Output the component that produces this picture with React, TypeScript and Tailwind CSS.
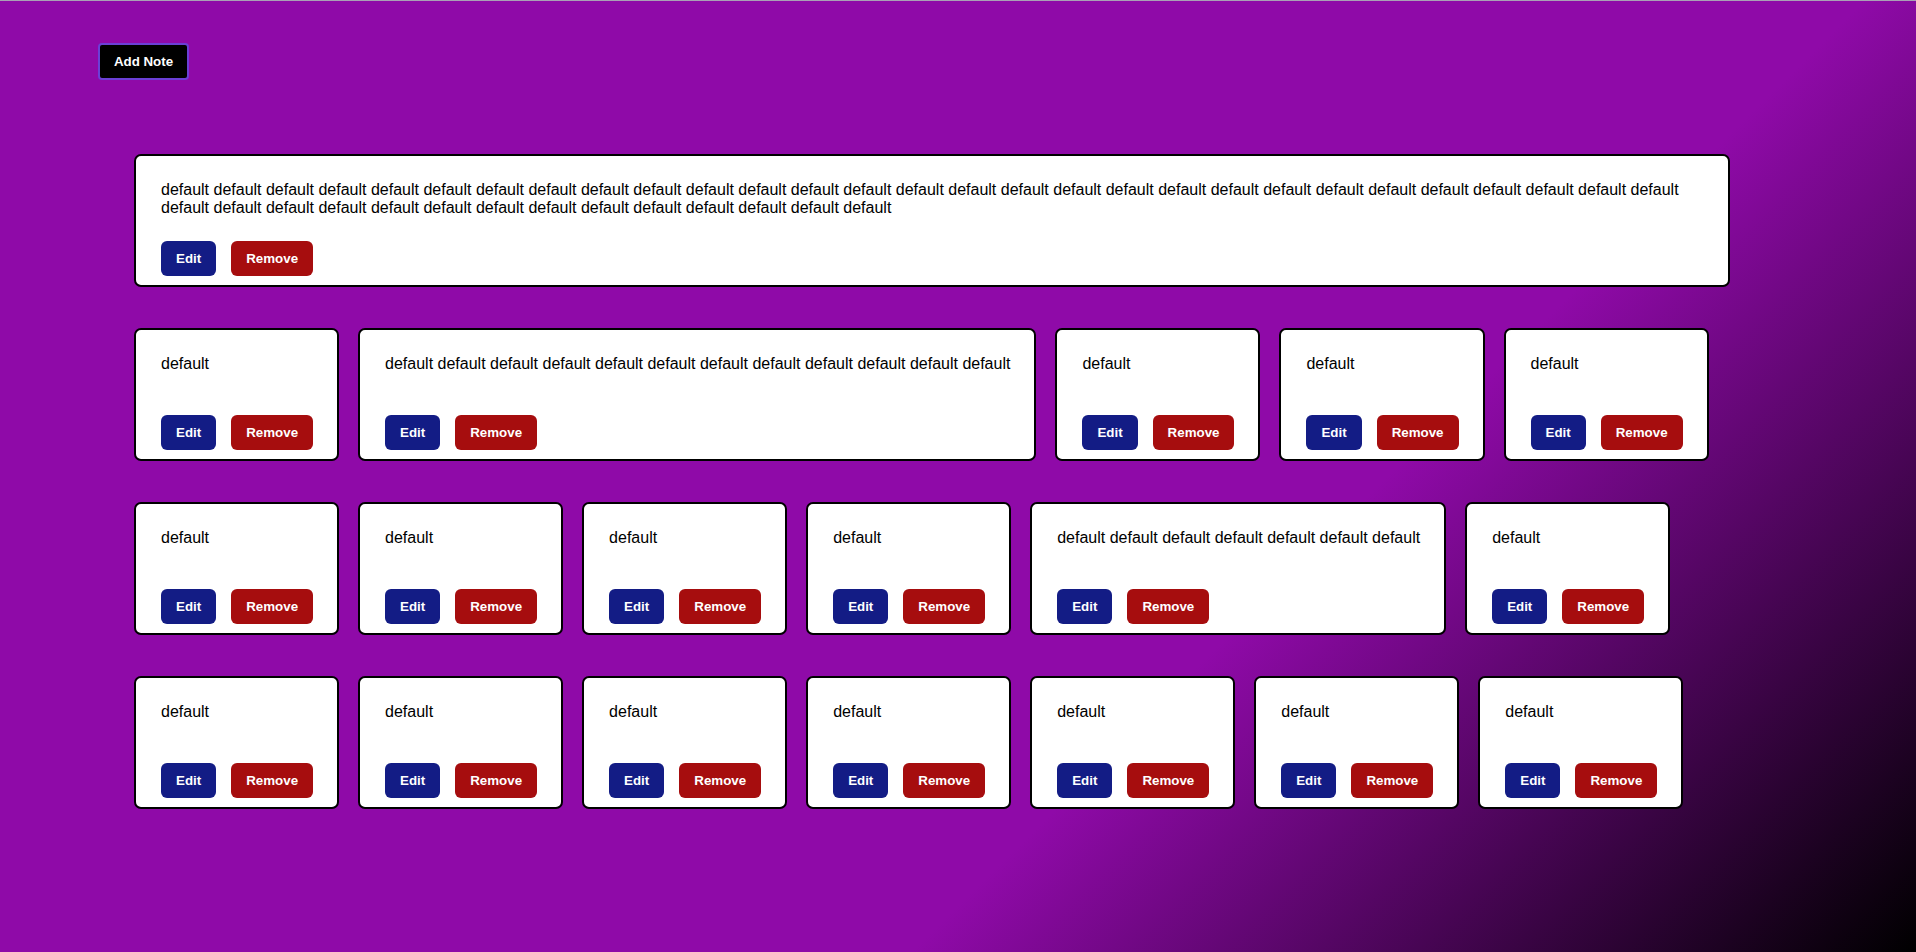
import React from "react";

const counts = [43, 1, 12, 1, 1, 1, 1, 1, 1, 1, 7, 1, 1, 1, 1, 1, 1, 1, 1];

function Note({ words }: { words: number }) {
  const text = Array.from({ length: words }, () => "default").join(" ");
  return (
    <div className="flex h-[133px] flex-col rounded-[7px] border-2 border-black bg-white pl-[25px] pr-[24px] pt-[25px] pb-[9px]">
      <p className="text-[16px] leading-[18px] text-black">{text}</p>
      <div className="mt-auto flex gap-[15px]">
        <button className="h-[35px] rounded-[6px] bg-[#131c85] px-[15px] text-[13.33px] font-bold text-white">
          Edit
        </button>
        <button className="h-[35px] rounded-[6px] bg-[#a60d0e] px-[15px] text-[13.33px] font-bold text-white">
          Remove
        </button>
      </div>
    </div>
  );
}

export default function App() {
  return (
    <div className="min-h-[952px] w-full border-t border-[#a9a1b5] bg-[linear-gradient(135deg,#8f0aa8_0%,#8f0aa8_65%,#000000_100%)] font-['Liberation_Sans',Arial,sans-serif]">
      <div className="pl-[98px] pt-[42px]">
        <button className="flex h-[37px] w-[91px] items-center justify-center rounded-[4px] border-2 border-[#6b3fd6] bg-black text-[13.33px] font-bold text-white">
          Add Note
        </button>
      </div>
      <div className="ml-[134px] mt-[74px] flex w-[1596px] flex-wrap gap-x-[19px] gap-y-[41px]">
        {counts.map((c, i) => (
          <Note key={i} words={c} />
        ))}
      </div>
    </div>
  );
}
